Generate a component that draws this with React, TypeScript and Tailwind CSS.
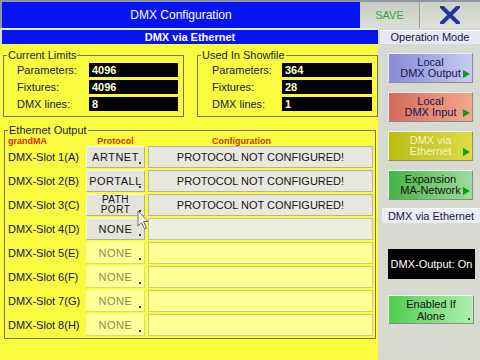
import { FC, ReactNode } from 'react';

type SlotState = 'set' | 'none' | 'off';

interface Slot {
  name: string;
  protocol: string[];
  config: string;
  state: SlotState;
}

const slots: Slot[] = [
  { name: 'DMX-Slot 1(A)', protocol: ['ARTNET'], config: 'PROTOCOL NOT CONFIGURED!', state: 'set' },
  { name: 'DMX-Slot 2(B)', protocol: ['PORTALL'], config: 'PROTOCOL NOT CONFIGURED!', state: 'set' },
  { name: 'DMX-Slot 3(C)', protocol: ['PATH', 'PORT'], config: 'PROTOCOL NOT CONFIGURED!', state: 'set' },
  { name: 'DMX-Slot 4(D)', protocol: ['NONE'], config: '', state: 'none' },
  { name: 'DMX-Slot 5(E)', protocol: ['NONE'], config: '', state: 'off' },
  { name: 'DMX-Slot 6(F)', protocol: ['NONE'], config: '', state: 'off' },
  { name: 'DMX-Slot 7(G)', protocol: ['NONE'], config: '', state: 'off' },
  { name: 'DMX-Slot 8(H)', protocol: ['NONE'], config: '', state: 'off' },
];

const protoCls: Record<SlotState, string> = {
  set: 'bg-[#e4e4dc] border-t-[#f6f6f0] border-l-[#f6f6f0] border-r-[#b0b0a2] border-b-[#b0b0a2] text-[#141414]',
  none: 'bg-[#e4e4dc] border-t-[#f6f6f0] border-l-[#f6f6f0] border-r-[#b0b0a2] border-b-[#b0b0a2] text-[#141414]',
  off: 'bg-[#ffff96] border-t-[#ffffc0] border-l-[#ffffc0] border-r-[#d8d888] border-b-[#d8d888] text-[#8c8c5e]',
};

const configCls: Record<SlotState, string> = {
  set: 'bg-[#e8e8e0] border-[#b4b4a2]',
  none: 'bg-[#eeeee0] border-[#c2c2ac]',
  off: 'bg-[#ffff96] border-[#caca80]',
};

const currentLimits = [
  ['Parameters:', '4096'],
  ['Fixtures:', '4096'],
  ['DMX lines:', '8'],
];

const usedLimits = [
  ['Parameters:', '364'],
  ['Fixtures:', '28'],
  ['DMX lines:', '1'],
];

const modes = [
  { lines: ['Local', 'DMX Output'], cls: 'from-[#8a8ad6] to-[#c8caf4] text-[#14144a]' },
  { lines: ['Local', 'DMX Input'], cls: 'from-[#d66a5a] to-[#f2a88e] text-[#14144a]' },
  { lines: ['DMX via', 'Ethernet'], cls: 'from-[#bcbc0e] to-[#dcdc44] text-[#f4f4cc]' },
  { lines: ['Expansion', 'MA-Network'], cls: 'from-[#44b244] to-[#9cdc9c] text-[#101010]' },
];

const Group: FC<{ title: string; className: string; children: ReactNode }> = ({ title, className, children }) => (
  <fieldset className={`border border-[#74745a] ${className}`}>
    <legend className="ml-[3px] px-[1px] text-[11px] leading-[12px] text-[#1c1c44]">{title}</legend>
    {children}
  </fieldset>
);

const Arrow: FC = () => (
  <svg className="absolute right-[2px] bottom-[4px]" width="7" height="8" viewBox="0 0 7 8">
    <polygon points="0,0 7,4 0,8" fill="#109a10" />
  </svg>
);

const Mark: FC = () => <span className="absolute right-[3px] bottom-[3px] w-[2px] h-[2px] bg-[#404040]" />;

const LimitRows: FC<{ rows: string[][]; labelCls: string; boxCls: string }> = ({ rows, labelCls, boxCls }) => (
  <div className="flex flex-col gap-[3px] pt-[2px] pb-[5px]">
    {rows.map(([label, value]) => (
      <div key={label} className="flex items-center h-[14px]">
        <span className={`text-[11px] text-[#202048] ${labelCls}`}>{label}</span>
        <span className={`h-[14px] bg-black pl-[3px] text-[11px] leading-[14px] font-bold text-[#ffffd2] ${boxCls}`}>
          {value}
        </span>
      </div>
    ))}
  </div>
);

export default function App() {
  return (
    <div className="w-[480px] h-[360px] overflow-hidden bg-[#d6dad0] font-['Liberation_Sans',Arial,sans-serif] flex flex-col">
      {/* title bar */}
      <div className="h-[28px] flex pt-[2px] bg-[#8e96a2]">
        <div className="w-[358px] ml-[2px] bg-[#0414f2] flex items-center justify-center text-white text-[12px]">
          DMX Configuration
        </div>
        <button className="w-[60px] bg-linear-to-b from-[#c8ccc4] to-[#dcdfd8] border-r border-[#9aa098] text-[11px] text-[#36a636]">
          SAVE
        </button>
        <button className="flex-1 bg-linear-to-b from-[#cdd1c9] to-[#dee1da] flex items-center justify-center">
          <svg width="20" height="18" viewBox="0 0 20 18">
            <path d="M2 1 L18 17 M18 1 L2 17" stroke="#25359a" strokeWidth="4" strokeLinecap="round" />
          </svg>
        </button>
      </div>

      <div className="flex-1 flex">
        {/* left: configuration */}
        <div className="w-[378px] flex flex-col">
          <div className="h-[2px] ml-[2px] bg-[#e6eaee]" />
          <div className="h-[14px] ml-[2px] bg-[#0414f2] flex items-center justify-center text-white text-[11px] font-bold">
            DMX via Ethernet
          </div>

          <div className="flex-1 bg-[#fafa3e] flex flex-col">
            <div className="flex mt-[5px]">
              <Group title="Current Limits" className="ml-[3px] w-[181px]">
                <LimitRows rows={currentLimits} labelCls="pl-[13px] w-[85px]" boxCls="w-[89px]" />
              </Group>
              <Group title="Used In Showfile" className="ml-[13px] w-[181px]">
                <LimitRows rows={usedLimits} labelCls="pl-[14px] w-[84px]" boxCls="w-[90px]" />
              </Group>
            </div>

            <Group title="Ethernet Output" className="ml-[4px] mt-[7px] w-[372px] pb-[2px]">
              <div className="h-[10px] flex items-center text-[9px] font-bold leading-[10px]">
                <span className="w-[81px] pl-[3px] text-[#e02a00]">grandMA</span>
                <span className="w-[59px] text-center text-[#c43a08]">Protocol</span>
                <span className="flex-1 ml-[3px] pr-[40px] text-center text-[#c43a08]">Configuration</span>
              </div>
              <div className="flex flex-col gap-[2px]">
                {slots.map((slot) => (
                  <div key={slot.name} className="flex h-[22px]">
                    <span className="w-[81px] pl-[3px] flex items-center text-[11px] text-[#12125a]">{slot.name}</span>
                    <div
                      className={`relative w-[59px] border flex flex-col items-center justify-center tracking-[0.5px] ${
                        slot.protocol.length > 1 ? 'text-[10px] leading-[10px]' : 'text-[11px] leading-[12px]'
                      } ${protoCls[slot.state]}`}
                    >
                      {slot.protocol.map((p) => (
                        <span key={p}>{p}</span>
                      ))}
                      <Mark />
                      {slot.protocol[0] === 'PATH' && (
                        <svg className="absolute left-[50px] top-[15px] z-10" width="12" height="20" viewBox="0 0 12 20">
                          <path
                            d="M1 1 L1 16 L4.5 12.5 L7.5 19 L9.5 18 L6.5 11.5 L11 11.5 Z"
                            fill="#ffffff"
                            stroke="#6a6a6a"
                            strokeWidth="1"
                            strokeLinejoin="round"
                          />
                        </svg>
                      )}
                    </div>
                    <div
                      className={`ml-[3px] w-[225px] border flex items-center justify-center text-[11px] text-[#141414] ${configCls[slot.state]}`}
                    >
                      {slot.config}
                    </div>
                  </div>
                ))}
              </div>
            </Group>
          </div>
        </div>

        {/* right: operation mode */}
        <div className="flex-1 flex flex-col">
          <div className="mt-[2px] ml-[2px] h-[14px] bg-[#e8e8f8] border-t border-[#f8f8ff] flex items-center justify-center text-[11px] text-[#14144a]">
            Operation Mode
          </div>
          <div className="mt-[9px] flex flex-col gap-[9px]">
            {modes.map((m) => (
              <button
                key={m.lines[1]}
                className={`relative ml-[10px] w-[85px] h-[30px] bg-linear-to-r border border-t-[#eeeeee] border-l-[#eeeeee] border-r-[#8a8a8a] border-b-[#8a8a8a] flex flex-col items-center justify-center text-[11px] leading-[11px] ${m.cls}`}
              >
                {m.lines.map((l) => (
                  <span key={l}>{l}</span>
                ))}
                <Arrow />
              </button>
            ))}
          </div>
          <div className="mt-[8px] ml-[4px] h-[15px] bg-[#ececf8] border-t border-[#fafaff] flex items-center justify-center text-[11px] text-[#14144a]">
            DMX via Ethernet
          </div>
          <div className="mt-[26px] ml-[10px] w-[87px] h-[30px] bg-black flex items-center justify-center text-[11px] text-white">
            DMX-Output: On
          </div>
          <button className="relative mt-[16px] ml-[10px] w-[86px] h-[29px] bg-linear-to-r from-[#4ecc4e] to-[#acf0ac] border border-t-[#eeeeee] border-l-[#eeeeee] border-r-[#8a8a8a] border-b-[#8a8a8a] flex flex-col items-center justify-center text-[11px] leading-[12px] text-[#101010]">
            <span>Enabled If</span>
            <span>Alone</span>
            <Mark />
          </button>
        </div>
      </div>
    </div>
  );
}
